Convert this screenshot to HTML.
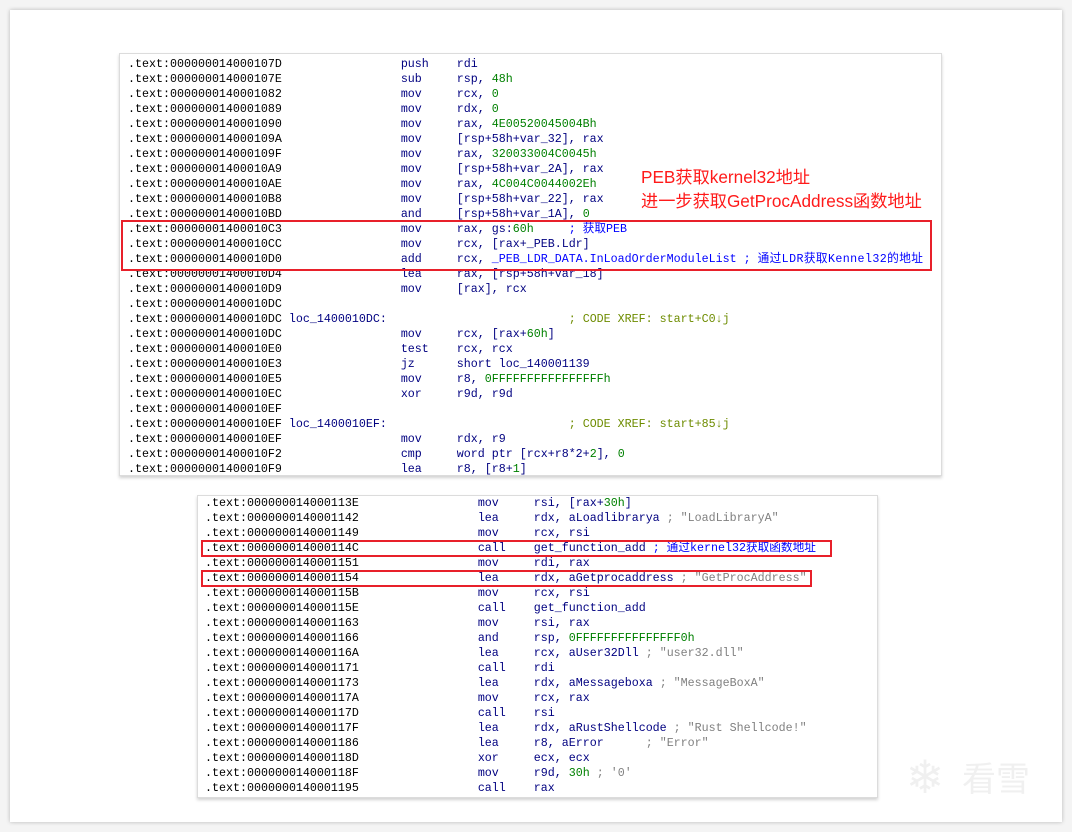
<!DOCTYPE html>
<html><head><meta charset="utf-8"><style>
html,body{margin:0;padding:0;background:#f4f4f4;}
body{width:1072px;height:832px;position:relative;overflow:hidden;}
.frame{position:absolute;left:10px;top:10px;width:1052px;height:812px;background:#fff;box-shadow:0 0 4px rgba(0,0,0,0.25);}
.panel{position:absolute;background:#fff;border:1px solid #dcdcdc;box-shadow:0 2px 3px rgba(0,0,0,0.18);overflow:hidden;}
pre{margin:0;font-family:"Liberation Mono","Noto Sans CJK SC",monospace;font-size:11.667px;line-height:15px;color:#000;white-space:pre;}
.m{color:#000080}.g{color:#008000}.c{color:#808080}.b{color:#0000ff}.x{color:#6e8c00}.l{color:#000080}
.box{position:absolute;border:2px solid #e8202a;box-sizing:border-box;}
.note{position:absolute;color:#ff1a1a;font-family:"Liberation Sans","Noto Sans CJK SC",sans-serif;font-size:17.2px;line-height:24px;}
.cj{letter-spacing:0.4px}
</style></head><body>
<div class="frame"></div>
<div class="panel" style="left:119px;top:53px;width:821px;height:421px;">
<pre style="position:absolute;left:8px;top:3px;">.text:000000014000107D                 <span class="m">push    rdi</span>
.text:000000014000107E                 <span class="m">sub     rsp, </span><span class="g">48h</span>
.text:0000000140001082                 <span class="m">mov     rcx, </span><span class="g">0</span>
.text:0000000140001089                 <span class="m">mov     rdx, </span><span class="g">0</span>
.text:0000000140001090                 <span class="m">mov     rax, </span><span class="g">4E00520045004Bh</span>
.text:000000014000109A                 <span class="m">mov     [rsp+58h+var_32], rax</span>
.text:000000014000109F                 <span class="m">mov     rax, </span><span class="g">320033004C0045h</span>
.text:00000001400010A9                 <span class="m">mov     [rsp+58h+var_2A], rax</span>
.text:00000001400010AE                 <span class="m">mov     rax, </span><span class="g">4C004C0044002Eh</span>
.text:00000001400010B8                 <span class="m">mov     [rsp+58h+var_22], rax</span>
.text:00000001400010BD                 <span class="m">and     [rsp+58h+var_1A], </span><span class="g">0</span>
.text:00000001400010C3                 <span class="m">mov     rax, gs:</span><span class="g">60h</span>     <span class="b">; 获取PEB</span>
.text:00000001400010CC                 <span class="m">mov     rcx, [rax+_PEB.Ldr]</span>
.text:00000001400010D0                 <span class="m">add     rcx, </span><span class="b">_PEB_LDR_DATA.InLoadOrderModuleList ; <span class="cj">通过LDR获取Kennel32的地址</span></span>
.text:00000001400010D4                 <span class="m">lea     rax, [rsp+58h+var_18]</span>
.text:00000001400010D9                 <span class="m">mov     [rax], rcx</span>
.text:00000001400010DC
.text:00000001400010DC <span class="l">loc_1400010DC:</span>                          <span class="x">; CODE XREF: start+C0↓j</span>
.text:00000001400010DC                 <span class="m">mov     rcx, [rax+</span><span class="g">60h</span><span class="m">]</span>
.text:00000001400010E0                 <span class="m">test    rcx, rcx</span>
.text:00000001400010E3                 <span class="m">jz      short loc_140001139</span>
.text:00000001400010E5                 <span class="m">mov     r8, </span><span class="g">0FFFFFFFFFFFFFFFFh</span>
.text:00000001400010EC                 <span class="m">xor     r9d, r9d</span>
.text:00000001400010EF
.text:00000001400010EF <span class="l">loc_1400010EF:</span>                          <span class="x">; CODE XREF: start+85↓j</span>
.text:00000001400010EF                 <span class="m">mov     rdx, r9</span>
.text:00000001400010F2                 <span class="m">cmp     word ptr [rcx+r8*2+</span><span class="g">2</span><span class="m">], </span><span class="g">0</span>
.text:00000001400010F9                 <span class="m">lea     r8, [r8+</span><span class="g">1</span><span class="m">]</span></pre>
</div>
<div class="box" style="left:121px;top:220px;width:811px;height:51px;"></div>
<div class="note" style="left:641px;top:165px;">PEB获取kernel32地址<br>进一步获取GetProcAddress函数地址</div>

<div class="panel" style="left:197px;top:495px;width:679px;height:301px;">
<pre style="position:absolute;left:7px;top:0px;">.text:000000014000113E                 <span class="m">mov     rsi, [rax+</span><span class="g">30h</span><span class="m">]</span>
.text:0000000140001142                 <span class="m">lea     rdx, aLoadlibrarya </span><span class="c">; "LoadLibraryA"</span>
.text:0000000140001149                 <span class="m">mov     rcx, rsi</span>
.text:000000014000114C                 <span class="m">call    get_function_add </span><span class="b">; 通过kernel32获取函数地址</span>
.text:0000000140001151                 <span class="m">mov     rdi, rax</span>
.text:0000000140001154                 <span class="m">lea     rdx, aGetprocaddress </span><span class="c">; "GetProcAddress"</span>
.text:000000014000115B                 <span class="m">mov     rcx, rsi</span>
.text:000000014000115E                 <span class="m">call    get_function_add</span>
.text:0000000140001163                 <span class="m">mov     rsi, rax</span>
.text:0000000140001166                 <span class="m">and     rsp, </span><span class="g">0FFFFFFFFFFFFFFF0h</span>
.text:000000014000116A                 <span class="m">lea     rcx, aUser32Dll </span><span class="c">; "user32.dll"</span>
.text:0000000140001171                 <span class="m">call    rdi</span>
.text:0000000140001173                 <span class="m">lea     rdx, aMessageboxa </span><span class="c">; "MessageBoxA"</span>
.text:000000014000117A                 <span class="m">mov     rcx, rax</span>
.text:000000014000117D                 <span class="m">call    rsi</span>
.text:000000014000117F                 <span class="m">lea     rdx, aRustShellcode </span><span class="c">; "Rust Shellcode!"</span>
.text:0000000140001186                 <span class="m">lea     r8, aError      </span><span class="c">; "Error"</span>
.text:000000014000118D                 <span class="m">xor     ecx, ecx</span>
.text:000000014000118F                 <span class="m">mov     r9d, </span><span class="g">30h</span><span class="m"> </span><span class="c">; '0'</span>
.text:0000000140001195                 <span class="m">call    rax</span></pre>
</div>
<div class="box" style="left:201px;top:540px;width:631px;height:17px;"></div>
<div class="box" style="left:201px;top:570px;width:611px;height:17px;"></div>

<div style="position:absolute;left:900px;top:752px;width:50px;height:50px;color:#f0f0f0;font-size:46px;line-height:50px;text-align:center;font-family:'DejaVu Sans',sans-serif;">❄</div>
<div style="position:absolute;left:962px;top:752px;color:#f0f0f0;font-size:34px;line-height:50px;font-family:'Noto Sans CJK SC',sans-serif;">看雪</div>
</body></html>
